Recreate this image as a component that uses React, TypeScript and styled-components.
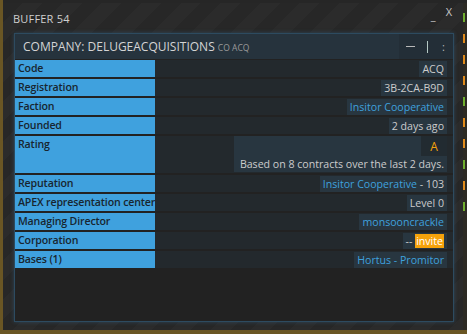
import React from 'react'
import styled, { createGlobalStyle } from 'styled-components'

const GlobalStyle = createGlobalStyle`
  html, body {
    margin: 0;
    padding: 0;
    background: #1c1c18;
  }
  body {
    font-family: "Open Sans", "Noto Sans", sans-serif;
  }
`

interface Row {
  label: string
  value: React.ReactNode
  tall?: boolean
}

// built lazily, the styled parts are declared further down
const buildRows = (): Row[] => [
  { label: 'Code', value: <Chip>ACQ</Chip> },
  { label: 'Registration', value: <Chip>3B-2CA-B9D</Chip> },
  { label: 'Faction', value: <Chip><Link>Insitor Cooperative</Link></Chip> },
  { label: 'Founded', value: <Chip>2 days ago</Chip> },
  {
    label: 'Rating',
    tall: true,
    value: (
      <RatingBox>
        <Grade>A</Grade>
        <RatingNote>Based on 8 contracts over the last 2 days.</RatingNote>
      </RatingBox>
    ),
  },
  { label: 'Reputation', value: <Chip><Link>Insitor Cooperative</Link> - 103</Chip> },
  { label: 'APEX representation center', value: <Chip>Level 0</Chip> },
  { label: 'Managing Director', value: <Chip><Link>monsooncrackle</Link></Chip> },
  { label: 'Corporation', value: <Chip>-- <Invite>invite</Invite></Chip> },
  { label: 'Bases (1)', value: <Chip><Link>Hortus - Promitor</Link></Chip> },
]

const ticks = ['#6fae2e', '#e08a1a', '#e08a1a', '#e08a1a', '#6fae2e', '#e08a1a', '#e08a1a', '#6fae2e', '#e08a1a', '#6fae2e']

function App() {
  const rows = buildRows()
  return (
    <>
      <GlobalStyle />
      <Backdrop>
        <TopStrip />
        <Middle>
          <Window>
            <TitleBar>
              <Title>BUFFER 54</Title>
              <TitleButtons>
                <Minimize>_</Minimize>
                <Close>X</Close>
              </TitleButtons>
            </TitleBar>
            <Panel>
              <Header>
                <HeaderTitle>
                  COMPANY: DELUGEACQUISITIONS <small>CO ACQ</small>
                </HeaderTitle>
                <HeaderTools>
                  <Dash />
                  <Bar />
                  <Dots>:</Dots>
                </HeaderTools>
              </Header>
              <Table>
                {rows.map(r => (
                  <React.Fragment key={r.label}>
                    <Label $tall={r.tall}>{r.label}</Label>
                    <Value>{r.value}</Value>
                  </React.Fragment>
                ))}
              </Table>
            </Panel>
          </Window>
          <SideStrip>
            {ticks.map((c, i) => (
              <Tick key={i} $color={c} />
            ))}
          </SideStrip>
        </Middle>
        <BottomStrip />
      </Backdrop>
    </>
  )
}

const Backdrop = styled.div`
  width: 467px;
  height: 334px;
  overflow: hidden;
  display: flex;
  flex-direction: column;
  background: #2a2a24;
  border-left: 3px solid #6a5624;
  box-sizing: border-box;
`

const TopStrip = styled.div`
  height: 3px;
  background: #262626;
`

const Middle = styled.div`
  display: flex;
  height: 327px;
`

const Window = styled.div`
  width: 460px;
  height: 327px;
  flex: none;
  box-sizing: border-box;
  display: flex;
  flex-direction: column;
  background: repeating-linear-gradient(
    135deg,
    #272727 0px,
    #272727 14px,
    #2b2b2b 14px,
    #2b2b2b 28px
  );
`

const TitleBar = styled.div`
  height: 30px;
  display: flex;
  align-items: center;
  justify-content: space-between;
  padding: 0 11px 0 10px;
`

const Title = styled.div`
  font-size: 11px;
  color: #cfcfcf;
  letter-spacing: 0.2px;
`

const TitleButtons = styled.div`
  display: flex;
  align-items: flex-start;
  gap: 10px;
  color: #c8c8c8;
  font-size: 11px;
`

const Minimize = styled.span`
  position: relative;
  top: -3px;
`

const Close = styled.span`
  position: relative;
  top: -7px;
`

const Panel = styled.div`
  margin: 0 9px 8px 11px;
  flex: 1;
  display: flex;
  flex-direction: column;
  background: #222222;
  border: 1px solid #2d4b60;
  box-shadow: 0 0 4px rgba(60, 130, 180, 0.35);
`

const Header = styled.div`
  height: 25px;
  display: flex;
  align-items: center;
  justify-content: space-between;
  background: #26333d;
`

const HeaderTitle = styled.div`
  padding-left: 8px;
  font-size: 12px;
  color: #d4d4d4;

  small {
    font-size: 8.5px;
    color: #9a9a9a;
  }
`

const HeaderTools = styled.div`
  height: 100%;
  width: 54px;
  display: flex;
  align-items: center;
  gap: 9px;
  padding-left: 7px;
  box-sizing: border-box;
  background: #232e37;
`

const Dash = styled.span`
  width: 9px;
  height: 1px;
  background: #b9b9b9;
`

const Bar = styled.span`
  width: 1px;
  height: 12px;
  margin-left: 3px;
  background: #b4c8c4;
`

const Dots = styled.span`
  color: #b9b9b9;
  font-size: 11px;
  margin-left: 5px;
`

const Table = styled.div`
  display: grid;
  grid-template-columns: 140px 1fr;
  row-gap: 2px;
  margin-top: 1px;
`

const Label = styled.div<{ $tall?: boolean }>`
  height: ${p => (p.$tall ? '37px' : '17px')};
  padding-left: 3px;
  background: #3fa1de;
  color: #18252f;
  font-size: 10.6px;
  line-height: 16px;
  font-weight: 600;
  letter-spacing: -0.15px;
  white-space: nowrap;
  overflow: hidden;
`

const Value = styled.div`
  display: flex;
  justify-content: flex-end;
  align-items: flex-start;
  padding: 1px 6px 0 0;
  background: #23292d;
`

const Chip = styled.div`
  height: 16px;
  padding: 0 3px;
  display: flex;
  align-items: center;
  background: #283640;
  color: #cccccc;
  font-size: 10.6px;
  white-space: pre;
`

const Link = styled.span`
  color: #3fa1de;
`

const Invite = styled.span`
  background: #f5a20b;
  color: #ffffff;
  padding: 0 1px;
  line-height: 14px;
`

const RatingBox = styled.div`
  margin-left: 79px;
  flex: 1;
  height: 36px;
  margin-top: -1px;
  display: flex;
  flex-direction: column;
  align-items: flex-end;
  background: #283640;
`

const Grade = styled.div`
  width: 26px;
  height: 20px;
  display: flex;
  align-items: center;
  justify-content: center;
  background: #222b31;
  color: #f5a20b;
  font-size: 12px;
`

const RatingNote = styled.div`
  padding: 1px 3px 0 0;
  color: #cccccc;
  font-size: 10.6px;
  white-space: nowrap;
`

const SideStrip = styled.div`
  flex: 1;
  display: flex;
  flex-direction: column;
  gap: 12px;
  padding-top: 10px;
  background: #2c2a24;
`

const Tick = styled.div<{ $color: string }>`
  width: 2px;
  height: 9px;
  background: ${p => p.$color};
`

const BottomStrip = styled.div`
  flex: 1;
  background: #6a5624;
`

export default App
